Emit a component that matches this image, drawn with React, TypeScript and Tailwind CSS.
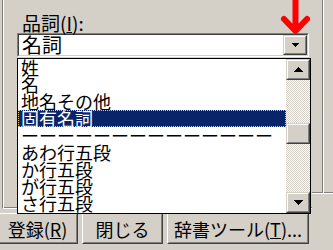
import React from "react";

function Tri({ dir, w, h }: { dir: "up" | "down"; w: number; h: number }) {
  const pts = dir === "down" ? `0,0 ${w},0 ${w / 2},${h}` : `0,${h} ${w},${h} ${w / 2},0`;
  return (
    <svg width={w} height={h} viewBox={`0 0 ${w} ${h}`} shapeRendering="crispEdges">
      <polygon points={pts} fill="#000" />
    </svg>
  );
}

function RaisedSmall({ children, className = "" }: { children?: React.ReactNode; className?: string }) {
  return (
    <div className={`border border-t-[#d4d0c8] border-l-[#d4d0c8] border-b-[#404040] border-r-[#404040] bg-[#d4d0c8] ${className}`}>
      <div className="flex h-full w-full items-center justify-center border border-t-white border-l-white border-b-[#808080] border-r-[#808080]">
        {children}
      </div>
    </div>
  );
}

function PushButton({ children, className = "" }: { children: React.ReactNode; className?: string }) {
  return (
    <div className={`h-[31px] shrink-0 border border-t-white border-l-white border-b-[#404040] border-r-[#404040] bg-[#d4d0c8] ${className}`}>
      <div className="flex h-full w-full items-center justify-center whitespace-nowrap border border-t-[#d4d0c8] border-l-[#d4d0c8] border-b-[#808080] border-r-[#808080] text-[18px] leading-[20px]">
        {children}
      </div>
    </div>
  );
}

const items = ["姓", "名", "地名その他", "固有名詞", "ーーーーーーーーーーーーーー", "あわ行五段", "か行五段", "が行五段", "さ行五段"];

export default function App() {
  return (
    <div className="relative h-[250px] w-[333px] overflow-hidden bg-[#d4d0c8] font-['Noto_Sans_CJK_JP','Noto_Sans',sans-serif] text-black">
      <div className="flex h-[209px]">
        <div className="ml-[2px] w-[310px] border-b border-l border-b-white border-l-[#808080] shadow-[inset_1px_0_0_#ffffff,inset_0_-1px_0_#808080]">
          <div className="pl-[19px] pt-[13px] text-[19px] leading-[20px]">
            品詞(<span className="underline">I</span>):
          </div>
          <div className="ml-[14px] h-[24px] w-[292px] border border-t-[#808080] border-l-[#808080] border-b-white border-r-white">
            <div className="flex h-full w-full items-center border border-t-[#404040] border-l-[#404040] border-b-[#d4d0c8] border-r-[#d4d0c8] bg-white">
              <span className="pl-[3px] text-[20px] leading-[20px]">名詞</span>
              <RaisedSmall className="ml-auto h-full w-[24px]">
                <Tri dir="down" w={7} h={4} />
              </RaisedSmall>
            </div>
          </div>
        </div>
        <div className="flex-1">
          <div className="h-[194px] border-b border-b-white shadow-[inset_0_-1px_0_#808080]">
            <div className="ml-[10px] h-full w-[2px] border-l border-r border-l-[#808080] border-r-white" />
          </div>
        </div>
      </div>

      <div className="ml-[-3px] mt-[4px] flex gap-[4px]">
        <PushButton className="w-[81px]">
          登録(<span className="underline">R</span>)
        </PushButton>
        <PushButton className="w-[81px]">閉じる</PushButton>
        <PushButton className="w-[142px]">
          辞書ツール(<span className="underline">T</span>)...
        </PushButton>
      </div>

      {/* dropdown list popup */}
      <div className="absolute left-[17px] top-[58px] flex h-[156px] w-[294px] border border-black bg-white">
        <div className="flex-1 overflow-hidden text-[18px] leading-[17px]">
          {items.map((t, i) =>
            i === 3 ? (
              <div key={i} className="h-[17px] whitespace-nowrap bg-[#0a246a] pl-[3px] text-white outline-1 outline-dotted outline-[#e8c878] outline-offset-[-1px]">
                {t}
              </div>
            ) : (
              <div key={i} className="h-[17px] whitespace-nowrap pl-[3px]">
                {t}
              </div>
            )
          )}
        </div>
        <div className="flex w-[24px] flex-col bg-[repeating-conic-gradient(#d4d0c8_0_25%,#ffffff_0_50%)] bg-[length:2px_2px]">
          <RaisedSmall className="h-[21px] w-full">
            <Tri dir="up" w={9} h={5} />
          </RaisedSmall>
          <div className="h-[43px]" />
          <RaisedSmall className="h-[21px] w-full" />
          <div className="flex-1" />
          <RaisedSmall className="h-[21px] w-full">
            <Tri dir="down" w={9} h={5} />
          </RaisedSmall>
        </div>
      </div>

      {/* red annotation arrow */}
      <svg className="pointer-events-none absolute left-0 top-0" width="333" height="250">
        <path d="M295.5 0 V29 M284 19 L295.5 31 L307 19" stroke="#ff0000" strokeWidth="6" fill="none" strokeLinecap="round" strokeLinejoin="round" />
      </svg>
    </div>
  );
}
